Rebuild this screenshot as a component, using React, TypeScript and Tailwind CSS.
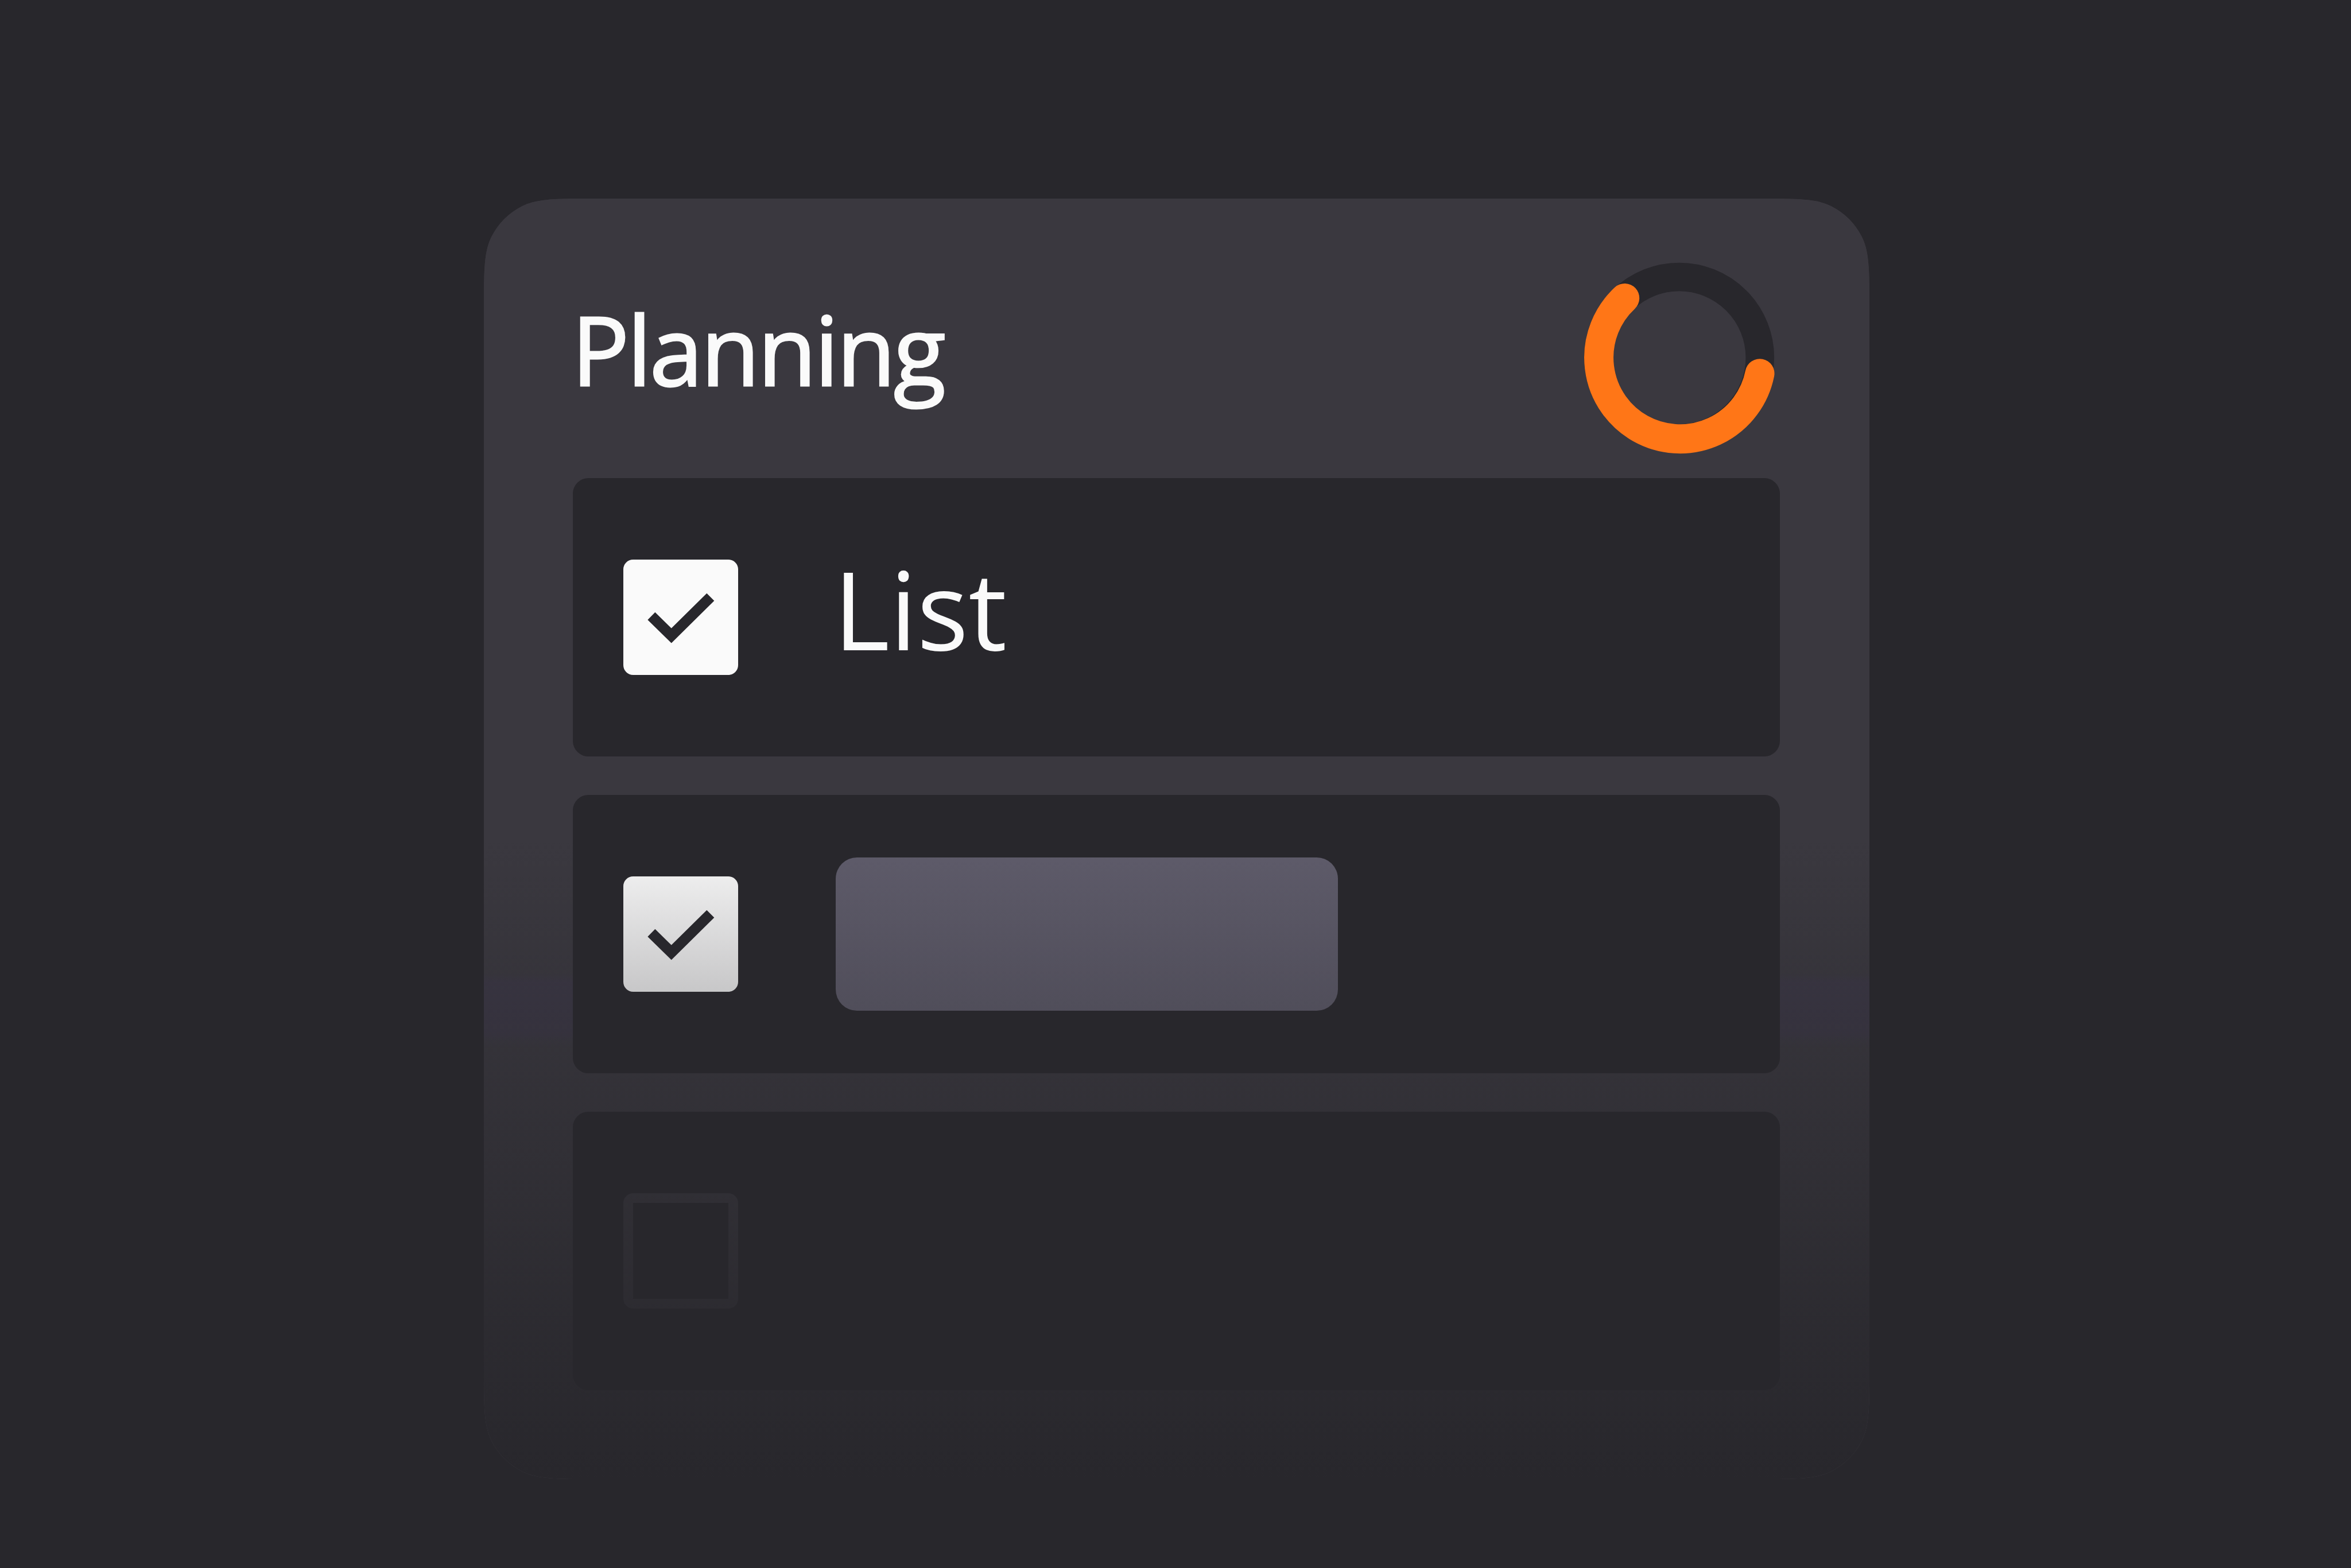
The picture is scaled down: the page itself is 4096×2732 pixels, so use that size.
import type { ReactNode } from 'react';

const CARD_WIDTH = 2414;
const CARD_HEIGHT = 2231;
const CARD_RADIUS = 122;

// Rounded rectangle with 60% corner smoothing.
function smoothRect(w: number, h: number, r: number): string {
  const p = 1.6 * r;
  const a = 0.56 * r;
  const ab = 0.84 * r;
  const abc = 1.054 * r;
  const d = 0.109 * r;
  const arc = 0.437 * r;
  const bc = 0.494 * r;
  const c = 0.214 * r;

  return [
    `M ${w - p} 0`,
    `c ${a} 0 ${ab} 0 ${abc} ${d}`,
    `a ${r} ${r} 0 0 1 ${arc} ${arc}`,
    `c ${d} ${c} ${d} ${bc} ${d} ${abc}`,
    `L ${w} ${h - p}`,
    `c 0 ${a} 0 ${ab} ${-d} ${abc}`,
    `a ${r} ${r} 0 0 1 ${-arc} ${arc}`,
    `c ${-c} ${d} ${-bc} ${d} ${-abc} ${d}`,
    `L ${p} ${h}`,
    `c ${-a} 0 ${-ab} 0 ${-abc} ${-d}`,
    `a ${r} ${r} 0 0 1 ${-arc} ${-arc}`,
    `c ${-d} ${-c} ${-d} ${-bc} ${-d} ${-abc}`,
    `L 0 ${p}`,
    `c 0 ${-a} 0 ${-ab} ${d} ${-abc}`,
    `a ${r} ${r} 0 0 1 ${arc} ${-arc}`,
    `c ${c} ${-d} ${bc} ${-d} ${abc} ${-d}`,
    'Z',
  ].join(' ');
}

function ProgressRing() {
  return (
    <svg className="mt-[108.5px] mr-[6.5px] size-[337px] shrink-0" viewBox="0 0 346 346" fill="none">
      <circle cx="172" cy="172.7" r="144.5" stroke="#28272c" strokeWidth="51" />
      <path
        d="M316.2 201A145.35 145.35 0 1 1 74.6 66.2"
        stroke="#ff7617"
        strokeWidth="52.4"
        strokeLinecap="round"
      />
    </svg>
  );
}

function Checkbox({ checked = false }: { checked?: boolean }) {
  if (!checked) {
    return <div className="size-[200.5px] shrink-0 rounded-[17px] border-[17px] border-[#3a383f]" />;
  }

  return (
    <div className="size-[200.5px] shrink-0 rounded-[17px] bg-[#fafafa]">
      <svg className="size-full" viewBox="0 0 206 206" fill="none">
        <path d="M50.2 101L86 136.2L156 67" stroke="#28272c" strokeWidth="19" />
      </svg>
    </div>
  );
}

function Row({ checked, children }: { checked?: boolean; children?: ReactNode }) {
  return (
    <div className="flex h-[485px] items-center rounded-[27px] bg-[#28272c] pl-[87.5px]">
      <Checkbox checked={checked} />
      {children}
    </div>
  );
}

export default function App() {
  return (
    <main className="h-[2732px] w-[4096px] overflow-hidden bg-[#28272c] pt-[346px] pl-[843px] font-['Open_Sans',sans-serif] text-[#fafafa]">
      <section
        className="relative h-[2231px] w-[2414px] bg-[#3a383f] bg-[linear-gradient(to_bottom,#3a383f_1350px,#3b3745_1366px,#3b3745_1452px,#3a383f_1476px)] pr-[156px] pl-[155px]"
        style={{ clipPath: `path("${smoothRect(CARD_WIDTH, CARD_HEIGHT, CARD_RADIUS)}")` }}
      >
        <header className="flex h-[487px] items-start justify-between">
          <h1 className="mt-[178px] -ml-[2px] text-[167px] leading-none font-medium tracking-[-3.4px] [-webkit-text-stroke:3px_#fafafa]">
            Planning
          </h1>
          <ProgressRing />
        </header>

        <div className="flex flex-col gap-[67px]">
          <Row checked>
            <span className="mb-[31px] ml-[166px] text-[188px] leading-none">List</span>
          </Row>
          <Row checked>
            <div className="ml-[169.5px] h-[267px] w-[875.5px] rounded-[37px] bg-[#5f5c6b]" />
          </Row>
          <Row />
        </div>

        <div className="absolute inset-x-0 top-[1112px] bottom-0 bg-linear-to-b/srgb from-[#28272c]/0 to-[#28272c]" />
      </section>
    </main>
  );
}
